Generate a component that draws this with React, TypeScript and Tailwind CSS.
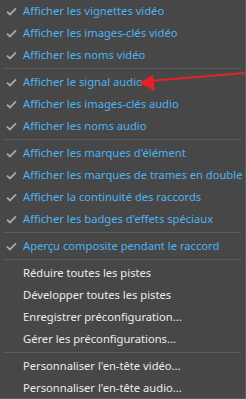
type Item = { label: string; checked?: boolean };

const groups: Item[][] = [
  [
    { label: "Afficher les vignettes vidéo", checked: true },
    { label: "Afficher les images-clés vidéo", checked: true },
    { label: "Afficher les noms vidéo", checked: true },
  ],
  [
    { label: "Afficher le signal audio", checked: true },
    { label: "Afficher les images-clés audio", checked: true },
    { label: "Afficher les noms audio", checked: true },
  ],
  [
    { label: "Afficher les marques d'élément", checked: true },
    { label: "Afficher les marques de trames en double", checked: true },
    { label: "Afficher la continuité des raccords", checked: true },
    { label: "Afficher les badges d'effets spéciaux", checked: true },
  ],
  [{ label: "Aperçu composite pendant le raccord", checked: true }],
  [
    { label: "Réduire toutes les pistes" },
    { label: "Développer toutes les pistes" },
    { label: "Enregistrer préconfiguration..." },
    { label: "Gérer les préconfigurations..." },
  ],
  [
    { label: "Personnaliser l'en-tête vidéo..." },
    { label: "Personnaliser l'en-tête audio..." },
  ],
];

const Check = () => (
  <svg width="11" height="9" viewBox="0 0 11 9" className="shrink-0">
    <path d="M1 4.6 L4 7.5 L10 1.3" fill="none" stroke="#a9a9a9" strokeWidth="1.8" />
  </svg>
);

const MenuRow = ({ item }: { item: Item }) => (
  <div className="flex h-[22px] items-center pt-px">
    <div className="flex w-[22px] justify-center">{item.checked && <Check />}</div>
    <span
      className={`whitespace-nowrap pl-px text-[11.2px] ${
        item.checked ? "text-[#4db3f2]" : "text-[#ececec]"
      }`}
    >
      {item.label}
    </span>
  </div>
);

export default function App() {
  return (
    <div
      className="relative h-[399px] w-[246px] overflow-hidden border-r border-b border-[#5e5e5e] bg-[#474747]"
      style={{ fontFamily: '"Noto Sans", sans-serif' }}
    >
      {groups.map((g, gi) => (
        <div key={gi}>
          {gi > 0 && (
            <div className="flex h-[5px] items-center px-[4px]">
              <div className="h-px w-full bg-[#5d5d5d]" />
            </div>
          )}
          {g.map((item) => (
            <MenuRow key={item.label} item={item} />
          ))}
        </div>
      ))}

      {/* red annotation arrow */}
      <svg className="absolute left-0 top-0" width="246" height="399">
        <line x1="246" y1="73" x2="150" y2="81" stroke="#e42228" strokeWidth="2" />
        <polygon points="139,83 153,75 155,91" fill="#e42228" />
      </svg>
    </div>
  );
}
